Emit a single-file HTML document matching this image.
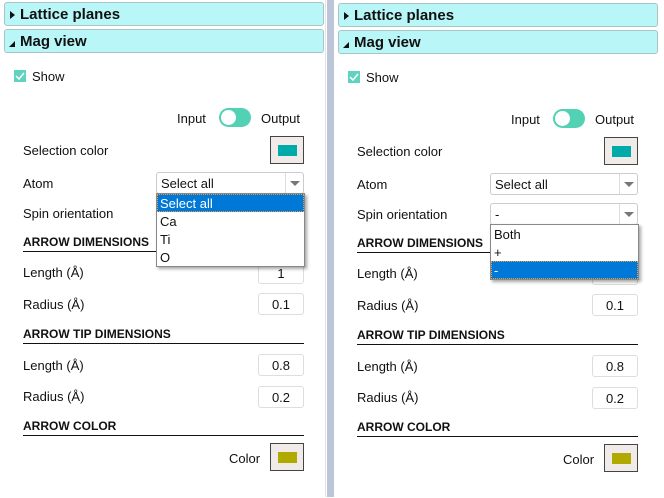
<!DOCTYPE html><html><head><style>
*{margin:0;padding:0;box-sizing:border-box}
body{width:664px;height:497px;background:#fff;position:relative;overflow:hidden;font-family:"Liberation Sans",sans-serif;font-size:13px;color:#111}
.p{position:absolute;top:0;width:328px;height:497px}
.a{position:absolute;white-space:nowrap;padding-top:1px}
.hd{position:absolute;left:4px;width:320px;height:24px;background:#b9f6f8;border:1px solid #a9c4c6;border-radius:3px;font-weight:bold;font-size:15px;line-height:24px;padding-left:15px}
.tri{position:absolute;left:5px;top:7px;width:0;height:0}
.sec{position:absolute;left:23px;width:281px;border-bottom:1.5px solid #111;font-weight:bold;font-size:12px;height:18px;line-height:16px}
.in{position:absolute;left:258px;width:46px;height:22px;border:1px solid #ddd;border-radius:3px;text-align:center;line-height:21px}
.sw{position:absolute;left:270px;width:34px;height:28px;background:#f0eae8;border:1px solid #444}
.sw i{position:absolute;left:7px;top:8px;width:19px;height:11px}
.sel{position:absolute;left:156px;width:148px;height:22px;border:1px solid #ccc;border-radius:3px;line-height:21px;padding-left:4px}
.sel b{position:absolute;right:0;top:0;width:18px;height:20px;border-left:1px solid #ddd}
.sel b:after{content:"";position:absolute;left:4px;top:8px;border:5px solid transparent;border-top:5px solid #777;border-bottom:0}
.dd{position:absolute;left:156px;width:149px;background:#fff;border:1px solid #888;box-shadow:2px 2px 3px rgba(0,0,0,.35)}
.dd div{height:18px;line-height:19px;padding-left:3px}
.dd .s{background:#0078d7;color:#fff;outline:1px dotted #e8a040;outline-offset:-1px}
</style></head><body>
<div style="position:absolute;left:327px;top:0;width:7px;height:497px;background:#bcc6d8"></div>
<div style="position:absolute;left:325px;top:0;width:1px;height:497px;background:#e4e4e4"></div>

<div class="p" style="left:0">
<div class="hd" style="top:2px"><span class="tri" style="border-left:5px solid #111;border-top:4px solid transparent;border-bottom:4px solid transparent;top:8px"></span>Lattice planes</div>
<div class="hd" style="top:29px"><span class="tri" style="border-left:6px solid transparent;border-bottom:6px solid #111;top:11px;left:4px"></span>Mag view</div>
<div class="a" style="left:14px;top:70px;width:12px;height:12px;background:#5fd3bf;padding:0"><svg width="12" height="12"><path d="M2 6l3 3 5-6" stroke="#fff" stroke-width="1.5" fill="none"/></svg></div>
<div class="a" style="left:32px;top:68px">Show</div>
<div class="a" style="left:177px;top:110px">Input</div>
<div class="a" style="left:219px;top:108px;width:32px;height:19px;border-radius:10px;background:#52d1b5;padding:0"><div style="position:absolute;left:2px;top:2px;width:15px;height:15px;border-radius:50%;background:#fff"></div></div>
<div class="a" style="left:261px;top:110px">Output</div>
<div class="a" style="left:23px;top:142px">Selection color</div>
<div class="sw" style="top:136px"><i style="background:#00aaa8"></i></div>
<div class="a" style="left:23px;top:175px">Atom</div>
<div class="sel" style="top:172px">Select all<b></b></div>
<div class="a" style="left:23px;top:205px">Spin orientation</div>
<div class="sel" style="top:202px">&nbsp;<b></b></div>
<div class="sec" style="top:234px">ARROW DIMENSIONS</div>
<div class="a" style="left:23px;top:264px">Length (Å)</div><div class="in" style="top:262px">1</div>
<div class="a" style="left:23px;top:296px">Radius (Å)</div><div class="in" style="top:293px">0.1</div>
<div class="sec" style="top:326px">ARROW TIP DIMENSIONS</div>
<div class="a" style="left:23px;top:357px">Length (Å)</div><div class="in" style="top:354px">0.8</div>
<div class="a" style="left:23px;top:388px">Radius (Å)</div><div class="in" style="top:386px">0.2</div>
<div class="sec" style="top:418px">ARROW COLOR</div>
<div class="a" style="left:229px;top:450px">Color</div>
<div class="sw" style="top:443px"><i style="background:#b0aa00"></i></div>
<div class="dd" style="top:193px"><div class="s">Select all</div><div>Ca</div><div>Ti</div><div>O</div></div>
</div>

<div class="p" style="left:334px;top:1px">
<div class="hd" style="top:2px"><span class="tri" style="border-left:5px solid #111;border-top:4px solid transparent;border-bottom:4px solid transparent;top:8px"></span>Lattice planes</div>
<div class="hd" style="top:29px"><span class="tri" style="border-left:6px solid transparent;border-bottom:6px solid #111;top:11px;left:4px"></span>Mag view</div>
<div class="a" style="left:14px;top:70px;width:12px;height:12px;background:#5fd3bf;padding:0"><svg width="12" height="12"><path d="M2 6l3 3 5-6" stroke="#fff" stroke-width="1.5" fill="none"/></svg></div>
<div class="a" style="left:32px;top:68px">Show</div>
<div class="a" style="left:177px;top:110px">Input</div>
<div class="a" style="left:219px;top:108px;width:32px;height:19px;border-radius:10px;background:#52d1b5;padding:0"><div style="position:absolute;left:2px;top:2px;width:15px;height:15px;border-radius:50%;background:#fff"></div></div>
<div class="a" style="left:261px;top:110px">Output</div>
<div class="a" style="left:23px;top:142px">Selection color</div>
<div class="sw" style="top:136px"><i style="background:#00aaa8"></i></div>
<div class="a" style="left:23px;top:175px">Atom</div>
<div class="sel" style="top:172px">Select all<b></b></div>
<div class="a" style="left:23px;top:205px">Spin orientation</div>
<div class="sel" style="top:202px">-<b></b></div>
<div class="sec" style="top:234px">ARROW DIMENSIONS</div>
<div class="a" style="left:23px;top:264px">Length (Å)</div><div class="in" style="top:262px">1</div>
<div class="a" style="left:23px;top:296px">Radius (Å)</div><div class="in" style="top:293px">0.1</div>
<div class="sec" style="top:326px">ARROW TIP DIMENSIONS</div>
<div class="a" style="left:23px;top:357px">Length (Å)</div><div class="in" style="top:354px">0.8</div>
<div class="a" style="left:23px;top:388px">Radius (Å)</div><div class="in" style="top:386px">0.2</div>
<div class="sec" style="top:418px">ARROW COLOR</div>
<div class="a" style="left:229px;top:450px">Color</div>
<div class="sw" style="top:443px"><i style="background:#b0aa00"></i></div>
<div class="dd" style="top:223px"><div>Both</div><div>+</div><div class="s">-</div></div>
</div>
</body></html>
